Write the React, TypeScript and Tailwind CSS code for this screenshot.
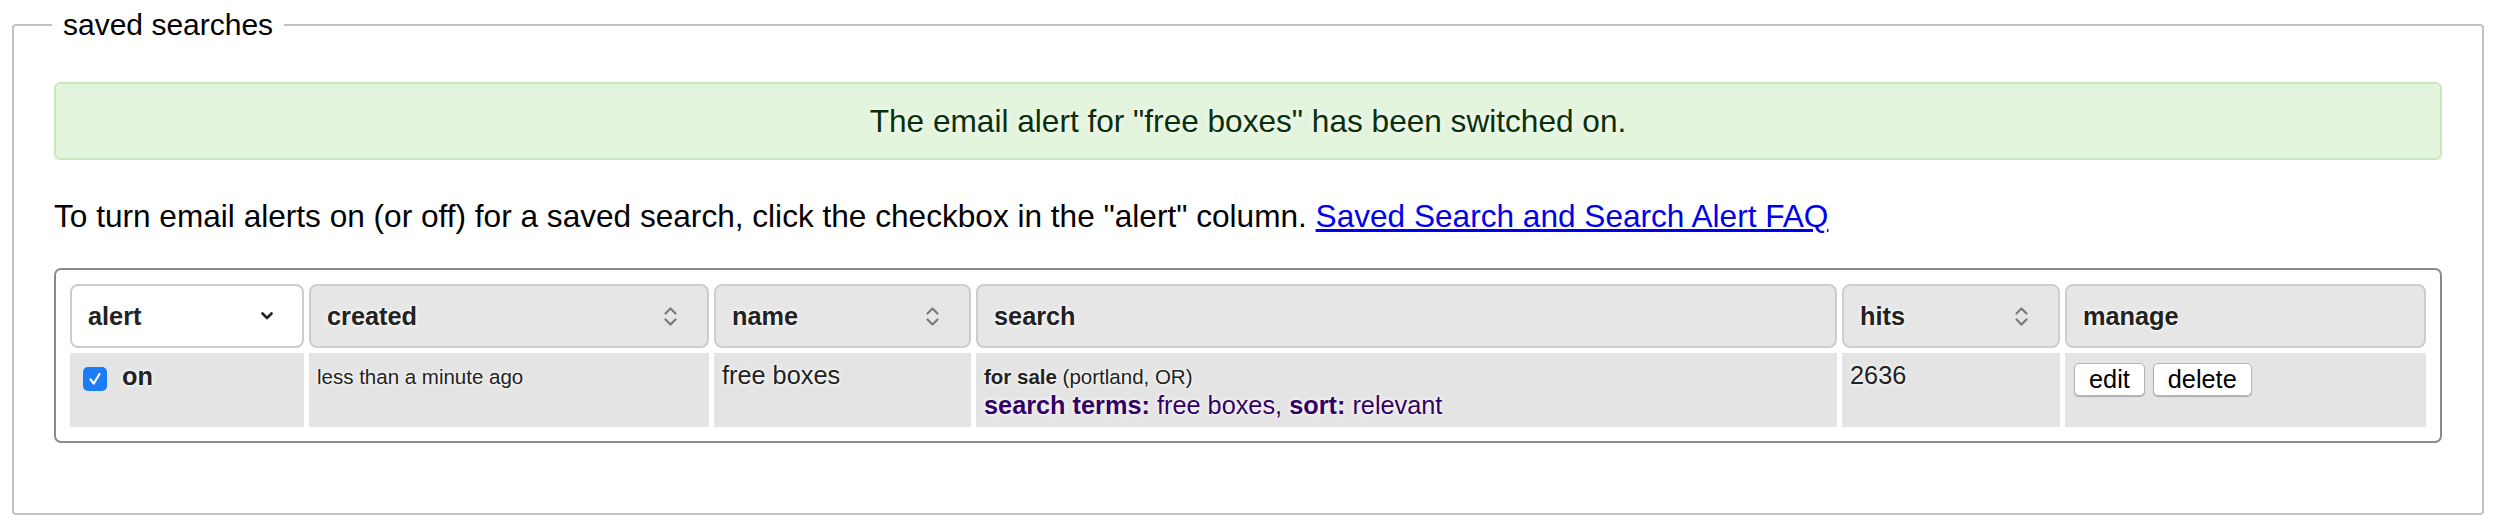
import React from 'react';

const glow = '[text-shadow:0_0_5px_#fff,0_0_2px_#fff]';

const SortIcon = () => (
    <svg width="15" height="21" viewBox="0 0 15 21" fill="none" stroke="#7a7a7a" strokeWidth="2.2" strokeLinecap="round" strokeLinejoin="round">
        <path d="M2.5 7.5 L7.5 2.5 L12.5 7.5" />
        <path d="M2.5 13.5 L7.5 18.5 L12.5 13.5" />
    </svg>
);

const Chevron = () => (
    <svg width="12" height="8" viewBox="0 0 12 8" fill="none" stroke="#222" strokeWidth="2.6" strokeLinecap="round" strokeLinejoin="round">
        <path d="M1.5 1.5 L6 6 L10.5 1.5" />
    </svg>
);

// header cell, the active sort column is white
const Th = ({ label, active = false, icon }: { label: string; active?: boolean; icon?: React.ReactNode }) => (
    <div
        className={`flex items-center justify-between rounded-[8px] border-2 border-[#cdcdcd] pl-[16px] pr-[29px] font-bold text-[#222] ${glow} ${active ? 'bg-white' : 'bg-[#e6e6e6]'}`}
    >
        <span>{label}</span>
        {icon}
    </div>
);

const Td = ({ children, className = '' }: { children?: React.ReactNode; className?: string }) => (
    <div className={`bg-[#e4e4e4] pt-[8px] pl-[8px] text-[#222] ${glow} ${className}`}>{children}</div>
);

const Btn = ({ label }: { label: string }) => (
    <button className="h-[33px] rounded-[5px] border border-[#b5b5b5] bg-white px-[14px] leading-[29px] text-black shadow-[0_1px_1px_rgba(0,0,0,0.25)]">
        {label}
    </button>
);

export default function App() {
    return (
        <div className="min-h-[531px] bg-white pt-[8px] font-['Liberation_Sans',Arial,sans-serif] text-black">
            <fieldset className="ml-[12px] w-[2472px] rounded-[4px] border-2 border-[#c2c2c2] px-[40px] pt-[40px] pb-[70px]">
                <legend className="ml-[-2px] px-[11px] text-[30px] leading-[34px]">saved searches</legend>

                {/* confirmation message */}
                <div className="rounded-[6px] border-2 border-[#c8e8bc] bg-[#e3f4dd] py-[19px] text-center text-[31.6px] leading-[36px] text-[#0a300a] [text-shadow:0_0_6px_#fff]">
                    The email alert for "free boxes" has been switched on.
                </div>

                <p className="mt-[38px] text-[31.6px] leading-[36px]">
                    To turn email alerts on (or off) for a saved search, click the checkbox in the "alert" column.{' '}
                    <a href="#" className="text-[#0000ee] underline">Saved Search and Search Alert FAQ</a>
                </p>

                {/* saved searches table */}
                <div className="mt-[34px] rounded-[7px] border-2 border-[#8a8a8a] p-[14px] text-[25.3px] leading-[29px]">
                    <div className="grid grid-cols-[234px_400px_257px_861px_218px_1fr] grid-rows-[64px_74px] gap-[5px]">
                        <Th label="alert" active icon={<Chevron />} />
                        <Th label="created" icon={<SortIcon />} />
                        <Th label="name" icon={<SortIcon />} />
                        <Th label="search" />
                        <Th label="hits" icon={<SortIcon />} />
                        <Th label="manage" />

                        <Td className="pl-[13px]">
                            <div className="flex items-center gap-[15px] pt-[1px]">
                                <span className="mt-[5px] flex h-[24px] w-[24px] items-center justify-center rounded-[5px] bg-[#1c7cf5] [text-shadow:none]">
                                    <svg width="16" height="16" viewBox="0 0 16 16" fill="none" stroke="#fff" strokeWidth="2.2" strokeLinecap="round" strokeLinejoin="round">
                                        <path d="M3.5 8.5 L6.8 12.5 L12.5 3" />
                                    </svg>
                                </span>
                                <span className="font-bold">on</span>
                            </div>
                        </Td>
                        <Td>
                            <span className="text-[20.5px]">less than a minute ago</span>
                        </Td>
                        <Td>free boxes</Td>
                        <Td>
                            <div>
                                <span className="text-[20.5px]">
                                    <b>for sale</b> (portland, OR)
                                </span>
                            </div>
                            <div className="text-[#330066]">
                                <b>search terms:</b> free boxes, <b>sort:</b> relevant
                            </div>
                        </Td>
                        <Td>2636</Td>
                        <Td className="pt-[10px] pl-[9px]">
                            <div className="flex gap-[8px]">
                                <Btn label="edit" />
                                <Btn label="delete" />
                            </div>
                        </Td>
                    </div>
                </div>
            </fieldset>
        </div>
    );
}
